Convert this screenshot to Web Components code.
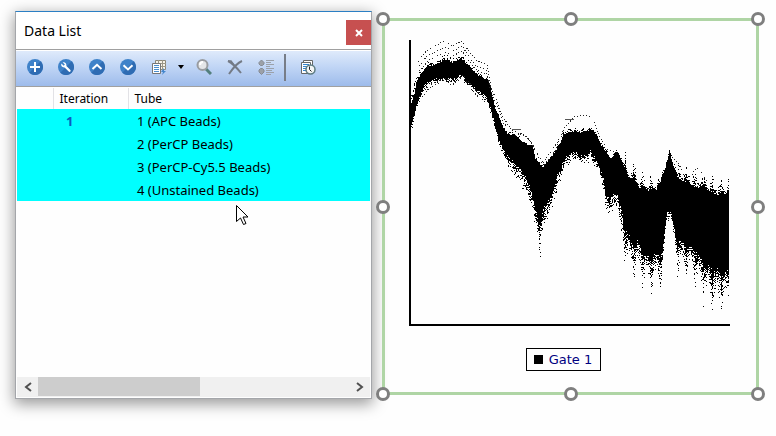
<!DOCTYPE html>
<html lang="en">
<head>
<meta charset="utf-8">
<title>Data List</title>
<style>
html{background:#fefefe}
body{margin:0;font:13px/20px "Noto Sans","Open Sans",sans-serif;color:#000}
</style>
</head>
<body>
<analysis-page></analysis-page>

<script>
const define = (name, html, setup) => {
  const tpl = document.createElement('template');
  tpl.innerHTML = html;
  customElements.define(name, class extends HTMLElement {
    constructor() {
      super();
      this.attachShadow({mode: 'open'}).append(tpl.content.cloneNode(true));
    }
    connectedCallback() { if (setup) setup(this, this.shadowRoot); }
  });
};

define('title-bar', `
<style>
:host{display:flex;align-items:flex-start;justify-content:space-between;height:37px;background:#fff;border-bottom:1px solid #a0a0a0}
h1{margin:0;padding-left:8px;font-size:14px;line-height:37px;font-weight:400}
button{width:25px;height:25px;margin:8px 0 0;padding:0;border:0;background:#c75050;display:grid;place-items:center}
svg{display:block}
</style>
<h1><slot></slot></h1>
<button aria-label="Close"><svg width="8" height="8" viewBox="0 0 8 8"><path d="M1 1 7 7M7 1 1 7" stroke="#fff" stroke-width="2"/></svg></button>`);

define('tool-button', `
<style>
:host{display:block;flex:none;width:31px}
:host([narrow]){width:14px}
button{display:grid;place-items:center;width:100%;height:32px;margin:0;padding:0;border:0;background:none}
::slotted(svg){display:block}
</style>
<button><slot></slot></button>`, (el, root) => {
  root.querySelector('button').setAttribute('aria-label', el.getAttribute('name'));
});

const disc = '<circle cx="8" cy="8" r="8" fill="#3f82c9"/><path d="M13.7 2.3A8 8 0 0 1 2.3 13.7z" fill="#2f6cb3"/>';
define('tool-bar', `
<style>
:host{display:flex;align-items:flex-start;height:35px;padding-left:3px;border-top:1px solid #fff;border-bottom:1px solid #a0a0a0;background:linear-gradient(#dfeafb,#c4d8f6 40%,#9dbbeb)}
i{width:2px;height:27px;margin:3px 6px 0 3px;background:#777d88}
</style>
<tool-button name="Add"><svg width="16" height="16">${disc}<path d="M8 3v10M3 8h10" stroke="#fff" stroke-width="2"/></svg></tool-button>
<tool-button name="Settings"><svg width="16" height="16">${disc}<path d="M4.6 3.3 6.9 5.6 5.7 6.8 3.4 4.5C2.6 6.5 3.9 8.6 6.6 8.4L10.7 12.6C11.8 13.6 13.4 12 12.4 10.9L8.4 7C8.7 4.1 6.8 2.6 4.6 3.3z" fill="#fff"/></svg></tool-button>
<tool-button name="Move up"><svg width="16" height="16">${disc}<path d="M3.5 10 8 5.8 12.5 10" fill="none" stroke="#fff" stroke-width="2"/></svg></tool-button>
<tool-button name="Move down"><svg width="16" height="16">${disc}<path d="M3.5 6.2 8 10.4 12.5 6.2" fill="none" stroke="#fff" stroke-width="2"/></svg></tool-button>
<tool-button name="Copy to table"><svg width="16" height="16"><path d="M4.5 1.5h10v9h-10z" fill="#f7f3e8" stroke="#8c8878"/><path d="M4 4.5h11M4 7.5h11M7.5 1v10M11.5 1v10" stroke="#9b9788"/><path d="M1.5 4.5h8v10h-8z" fill="#fff" stroke="#777"/><path d="M3 6.5h5M3 8.5h5M3 10.5h5M3 12.5h5" stroke="#4b8fcd"/><path d="M13 9v3h2l-4 4 1-3h-2z" fill="#4486cb"/></svg></tool-button>
<tool-button name="More" narrow><svg width="6" height="4"><path d="M0 0h6L3 4z"/></svg></tool-button>
<tool-button name="Find"><svg width="16" height="16"><path d="M10 10l5 5" stroke="#527f7d" stroke-width="3"/><circle cx="6.5" cy="6" r="5" fill="#e4e6e8" stroke="#999ca0" stroke-width="2"/><path d="M4 6a3 3 0 0 1 3-3" fill="none" stroke="#fff" stroke-width="2"/></svg></tool-button>
<tool-button name="Delete"><svg width="16" height="16"><path d="M1 2C5 4 10 9 14 14M15 2C10 4 6 9 2 15" fill="none" stroke="#747b86" stroke-width="2"/><path d="M1 2l3 0 3 4" fill="none" stroke="#747b86" stroke-width="1.5"/></svg></tool-button>
<tool-button name="Order"><svg width="16" height="16"><path d="M3.5 1 6 3.500v1.500L4.500 6.500h-2L1 5V3.500zM3.500 15.500 6 13v-2L4.500 9.500h-2L1 11v2z" fill="#9ca1a8" stroke="#858b94"/><path d="M8 1.5h8M8 3.5h5M8 5.5h8M8 7.5h4M8 9.5h8M8 11.5h6M8 13.5h8M8 15.5h5" stroke="#9ba1aa"/></svg></tool-button>
<i></i>
<tool-button name="History"><svg width="16" height="16"><path d="M3.5 1.5h9v10h-9z" fill="#fff" stroke="#666"/><path d="M1.5 3.5h9v11h-9z" fill="#fff" stroke="#666"/><path d="M3 5.5h6M3 7.5h4M3 9.5h3M3 11.5h3" stroke="#3485cf"/><circle cx="10.5" cy="10.5" r="4.5" fill="#f4f6f6" stroke="#5d7b80" stroke-width="1.5"/><path d="M9.5 7.5v3l2 2" fill="none" stroke="#222"/></svg></tool-button>`);

define('tube-table', `
<style>
:host{display:block}
table{width:100%;border-collapse:collapse;table-layout:fixed}
.mark{width:36px}.num{width:75px}
th,td{height:23px;padding:0;line-height:20px;text-align:left;font-size:13px;font-weight:400;white-space:nowrap}
th{height:21px;padding-left:6px;font-size:12px;border-left:1px solid #e2e2e6}
th:first-child{border-left:0}
tbody{background:#0ff}
td{padding-left:9px}
td:nth-child(2){padding-left:13px;color:#0a5cc0;font-weight:700}
</style>
<table>
<colgroup><col class="mark"><col class="num"><col></colgroup>
<thead><tr><th></th><th>Iteration</th><th>Tube</th></tr></thead>
<tbody>
<tr><td></td><td>1</td><td>1 (APC Beads)</td></tr>
<tr><td></td><td></td><td>2 (PerCP Beads)</td></tr>
<tr><td></td><td></td><td>3 (PerCP-Cy5.5 Beads)</td></tr>
<tr><td></td><td></td><td>4 (Unstained Beads)</td></tr>
</tbody></table>`);

define('scroll-strip', `
<style>
:host{display:grid;grid-template-columns:21px 1fr 21px;height:20px;background:#f0f0f0}
button{padding:0;border:0;background:none;display:grid;place-items:center}
.thumb{width:52%;height:19px;background:#cdcdcd}
</style>
<button aria-label="Scroll left"><svg width="8" height="10"><path d="M7 1 2 5l5 4" fill="none" stroke="#505050" stroke-width="2"/></svg></button>
<div><div class="thumb"></div></div>
<button aria-label="Scroll right"><svg width="8" height="10"><path d="M1 1l5 4-5 4" fill="none" stroke="#505050" stroke-width="2"/></svg></button>`);

define('data-list', `
<style>
:host{display:flex;flex-direction:column;box-sizing:border-box;border:1px solid #a4a6aa;border-top-color:#2b7fc4;background:#fefefe;box-shadow:0 4px 14px 1px rgba(0,0,0,.4)}
.list{flex:1;display:flex;flex-direction:column;justify-content:space-between;padding:1px}
</style>
<title-bar>Data List</title-bar>
<tool-bar></tool-bar>
<div class="list"><tube-table></tube-table><scroll-strip></scroll-strip></div>`);

// Edges of the dense band and reach of the scatter beyond them: [x, value] in plot units
const band = {
  top: [[2,63],[6,48],[9,37],[18,25],[24,24],[33,20],[38,18],[43,22],[52,17],[58,23],[68,34],[78,38],[81,47],[86,68],[94,87],[99,93],[104,93],[111,99],[118,104],[123,105],[126,117],[133,127],[139,120],[148,107],[156,92],[164,90],[171,92],[183,88],[188,97],[194,108],[201,117],[205,114],[208,110],[213,123],[219,138],[225,138],[229,147],[238,149],[246,150],[251,141],[256,128],[258,121],[260,110],[262,120],[265,129],[269,138],[274,142],[278,140],[282,146],[289,149],[294,145],[298,151],[307,154],[316,154],[320,150]],
  low: [[2,85],[6,67],[11,52],[16,43],[23,40],[33,37],[44,38],[52,33],[58,40],[66,48],[78,57],[83,73],[89,97],[96,112],[103,120],[111,128],[118,137],[123,152],[126,167],[130,182],[134,167],[143,150],[148,133],[156,117],[164,110],[174,116],[181,110],[188,120],[193,133],[196,148],[199,155],[204,150],[208,152],[213,173],[214,183],[219,191],[224,202],[229,199],[234,210],[242,214],[247,209],[251,212],[254,200],[256,183],[258,170],[260,168],[262,172],[264,183],[267,198],[273,199],[281,203],[289,210],[294,220],[303,226],[311,226],[320,228]],
  upReach: [[2,22],[12,7],[80,5],[120,3],[160,6],[215,6],[320,8]],
  lowReach: [[2,10],[20,6],[80,8],[96,14],[128,24],[131,42],[134,26],[160,11],[190,14],[200,24],[210,20],[215,56],[242,52],[253,56],[256,22],[263,22],[268,52],[290,48],[300,60],[320,68]]
};
const at = (pts, x) => {
  let i = 1;
  while (i < pts.length - 1 && pts[i][0] < x) i++;
  const [a, b] = [pts[i - 1], pts[i]];
  return a[1] + (b[1] - a[1]) * (x - a[0]) / (b[0] - a[0]);
};
const traces = [
  'M9 22 17 11 35 1 44 6 52 1 67 20 78 25 82 47 94 77 102 89M106 96 113 93 122 102 134 123 148 103 156 87',
  'M10 26 18 16 36 7 44 11 53 6 66 25 77 30 81 48',
  'M10 31 20 20 36 12 44 16 53 11 66 29 78 35 83 53 95 84 105 91 118 97 123 104 134 126 146 111 156 87 165 77 175 75 183 77 190 95 198 109 206 112',
  'M10 62 20 48 36 40 43 45 54 37 67 55 78 63 M10 57 20 45 37 38 44 43 54 35 67 51 79 60',
  'M263 117 270 124 275 137 M283 135 287 128 291 130 298 142'
];
define('gate-plot', `
<style>
:host{display:block}
svg{display:block;width:100%;height:auto}
</style>
<svg viewBox="0 0 321 286" role="img" aria-label="Gate 1 intensity plot" shape-rendering="crispEdges"><path id="data" fill="#000"/><g id="traces" fill="none" stroke="#222" stroke-width="1" stroke-dasharray="1 2"></g><path d="M103 89.5h9M156 79.5h9" stroke="#555"/><path d="M1 0v285h320" fill="none" stroke="#000" stroke-width="2"/></svg>`, (el, root) => {
  let seed = 91;
  const rnd = () => (seed = (seed * 16807) % 2147483647) / 2147483647;
  let d = '';
  const dot = (x, y, h = 1) => { d += `M${x} ${y}h1v${h}h-1z`; };
  for (let x = 2; x < 320; x++) {
    const t = Math.round(at(band.top, x) + rnd() * 2);
    const b = Math.round(at(band.low, x) - rnd() * 2);
    dot(x, t, b - t);
    // Past x = 215 the readings spike at a regular interval
    const right = x > 212;
    const peak = right ? Math.abs((((x - 216) % 8.7) + 8.7) % 8.7 / 4.35 - 1) : 0;
    const up = at(band.upReach, x) + (right && (x < 250 || x > 268) ? 20 * peak ** 2 : 0);
    const down = at(band.lowReach, x) * (right ? .4 + .6 * peak ** 2 : 1);
    for (let k = 1; k < up; k++) if (rnd() < (right ? 1.1 : .5) * (1 - k / up) ** 2) dot(x, t - k);
    for (let k = 0; k < down; k++)
      if (b + k < 279 && rnd() < 1.1 * (1 - k / down) ** 1.7) dot(x, b + k);
  }
  root.getElementById('data').setAttribute('d', d);
  root.getElementById('traces').innerHTML = traces.map(p => `<path d="${p}"/>`).join('');
});

define('plot-legend', `
<style>
:host{display:flex;align-items:center;gap:6px;height:21px;padding:0 8px 0 7px;border:1px solid #000;font:13px/21px "DejaVu Sans",sans-serif;color:#000080}
i{width:9px;height:9px;background:#000}
</style><i></i><span><slot></slot></span>`);

define('plot-frame', `
<style>
:host{display:flex;flex-direction:column;align-items:center;gap:22px;position:relative;box-sizing:border-box;padding:19px 26px 21px 24px;border:3px solid #afd5a5}
::slotted(gate-plot){align-self:stretch}
::slotted(plot-legend){margin-right:12px}
b{position:absolute;box-sizing:border-box;width:14px;height:14px;border:3px solid #7f7f7f;border-radius:50%;background:#fff}
.l{left:0;margin-left:-9px}.c{left:50%;margin-left:-7px}.r{left:100%;margin-left:-5px}
.t{top:0;margin-top:-9px}.m{top:50%;margin-top:-7px}.e{top:100%;margin-top:-5px}
</style>
<slot></slot>
<b class="l t"></b><b class="c t"></b><b class="r t"></b>
<b class="l m"></b><b class="r m"></b>
<b class="l e"></b><b class="c e"></b><b class="r e"></b>`);

define('analysis-page', `
<style>
:host{display:grid;grid-template-columns:minmax(0,357fr) minmax(0,377fr);gap:10px;padding:11px 17px 37px 15px;position:relative}
plot-frame{margin:7px 0 4px;align-self:start}
.cursor{position:absolute;left:236px;top:205px}
</style>
<data-list></data-list>
<plot-frame><gate-plot></gate-plot><plot-legend>Gate 1</plot-legend></plot-frame>
<svg class="cursor" width="13" height="21" viewBox="0 0 13 21"><path d="M.5 .5v16l4-3.5 3 6.5 2.5-1-3-6.500h5z" fill="#fff" stroke="#000"/></svg>`);
</script>
</body>
</html>
